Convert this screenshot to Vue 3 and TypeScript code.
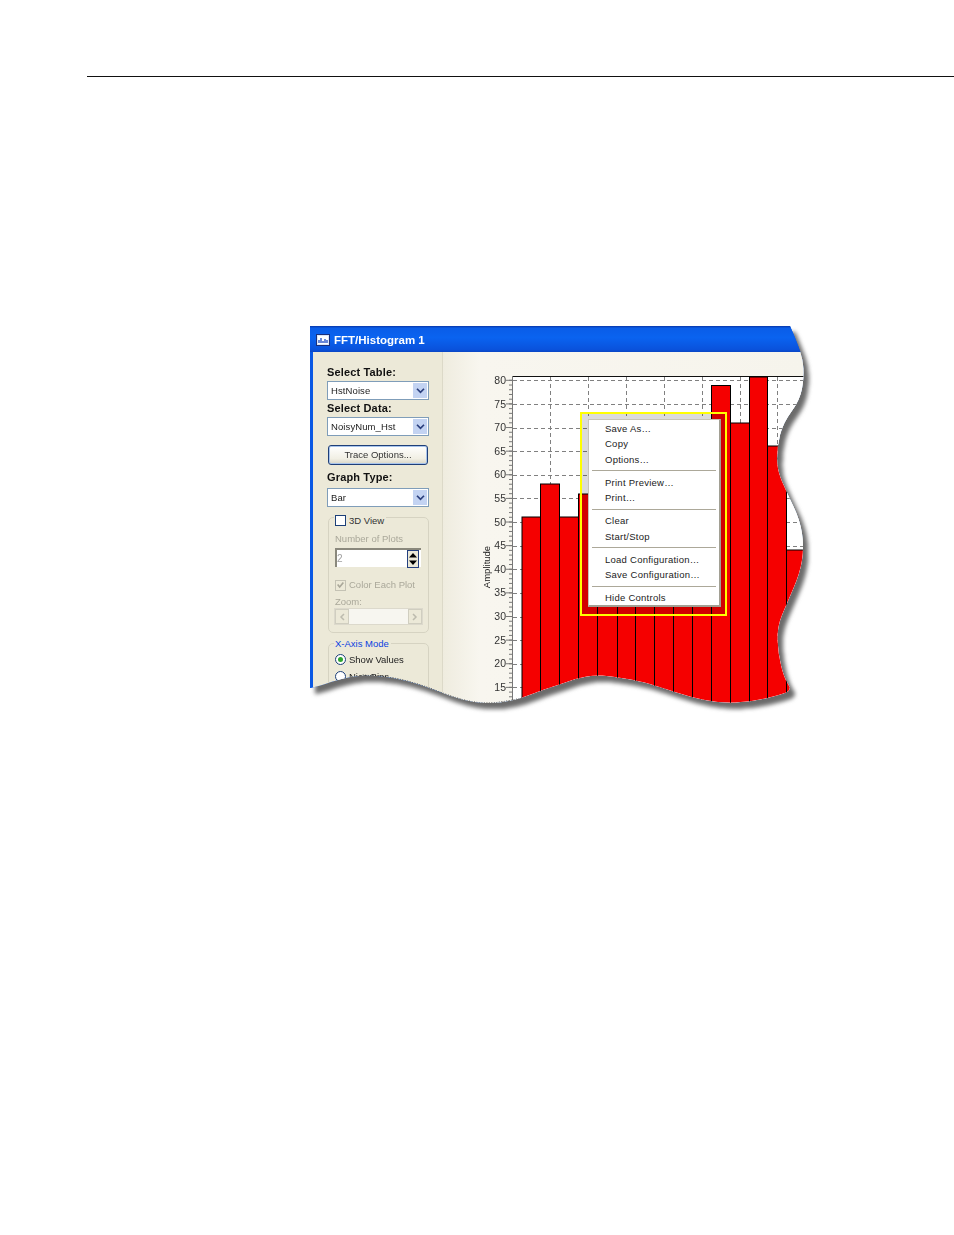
<script setup lang="ts">
const ox = 310
const oy = 326
const edge: [number, number][] = [
  [790, 326], [797, 342], [803, 360], [804, 377], [800, 400], [783, 423], [777, 447], [777, 470], [787, 493],
  [800, 520], [804, 547], [800, 573], [787, 603], [777, 627], [778, 653], [784, 678], [792, 690], [780, 695],
  [750, 702], [720, 703], [690, 697], [660, 687], [640, 681], [610, 676], [595, 675], [578, 678], [558, 685],
  [542, 690], [522, 698], [500, 703], [475, 703], [450, 696], [422, 685], [392, 677], [362, 675], [340, 679],
  [322, 685], [311, 688],
]
function smooth(pts: [number, number][], dx: number, dy: number): string {
  let d = `M${pts[0][0] - dx} ${pts[0][1] - dy}`
  for (let i = 1; i < pts.length - 1; i++) {
    const mx = (pts[i][0] + pts[i + 1][0]) / 2 - dx
    const my = (pts[i][1] + pts[i + 1][1]) / 2 - dy
    d += ` Q${pts[i][0] - dx} ${pts[i][1] - dy} ${mx} ${my}`
  }
  const last = pts[pts.length - 1]
  return d + ` L${last[0] - dx} ${last[1] - dy}`
}
const clipD = `M0 0 L480 0 ` + smooth(edge, ox, oy).slice(1) + ` L0 362 Z`
const clipStyle = { clipPath: `path('${clipD}')` }
const start = edge.findIndex(p => p[0] === 522)
const end = edge.findIndex(p => p[0] === 362)
const dotted = smooth(edge.slice(start, end + 1), ox, oy)

const labels = [80, 75, 70, 65, 60, 55, 50, 45, 40, 35, 30, 25, 20, 15].map((v, i) => ({ v, y: 380.3 + i * 23.62, g: Math.round(380.3 + i * 23.62) + 0.5 }))
const minor = Array.from({ length: 70 }, (_, i) => 380.3 + i * 4.724)
const vgrid = [550.5, 588.5, 626.5, 664.5, 702.5, 740.5, 777.5]
const edges = [522, 540.5, 559.5, 578.5, 597.5, 617.5, 635.5, 654.5, 673.5, 692.5, 711.5, 730.5, 749.5, 767.5, 786.5, 807]
const tops = [517, 484, 517, 494, 440, 440, 440, 440, 440, 440, 385.5, 423, 377, 446, 550]
const bars = tops.map((t, i) => ({ x: edges[i], w: edges[i + 1] - edges[i], y: t }))

const menu = [
  ['Save As…', 'Copy', 'Options…'],
  ['Print Preview…', 'Print…'],
  ['Clear', 'Start/Stop'],
  ['Load Configuration…', 'Save Configuration…'],
  ['Hide Controls'],
]
</script>

<template>
  <div class="page">
    <hr class="rule" />
    <figure class="figure">
      <div class="window" :style="clipStyle">
        <header class="title">
          <svg class="ticon" viewBox="0 0 14 12" width="14" height="12">
            <rect x="0.5" y="0.5" width="13" height="11" fill="#dce6f8" stroke="#1a2f7a" />
            <rect x="2" y="2" width="10" height="8" fill="#fff" />
            <path d="M3 9V6M5 9V4M7 9V7M9 9V5M11 9V6" stroke="#2a55c8" stroke-width="1.4" />
          </svg>
          <span>FFT/Histogram 1</span>
        </header>
        <div class="client">
          <aside class="side">
            <label class="lbl first">Select Table:</label>
            <div class="combo"><span>HstNoise</span><i class="drop"><svg viewBox="0 0 10 8" width="9" height="7"><path d="M1 2l4 4 4-4" fill="none" stroke="#2b3f7d" stroke-width="2" /></svg></i></div>
            <label class="lbl tight">Select Data:</label>
            <div class="combo"><span>NoisyNum_Hst</span><i class="drop"><svg viewBox="0 0 10 8" width="9" height="7"><path d="M1 2l4 4 4-4" fill="none" stroke="#2b3f7d" stroke-width="2" /></svg></i></div>
            <button class="btn">Trace Options...</button>
            <label class="lbl gt">Graph Type:</label>
            <div class="combo"><span>Bar</span><i class="drop"><svg viewBox="0 0 10 8" width="9" height="7"><path d="M1 2l4 4 4-4" fill="none" stroke="#2b3f7d" stroke-width="2" /></svg></i></div>

            <section class="group g1">
              <div class="legend check-legend"><i class="box"></i><span>3D View</span></div>
              <div class="dim nop">Number of Plots</div>
              <div class="spin">
                <span>2</span>
                <i class="spinbtn">
                  <svg viewBox="0 0 12 18" width="12" height="18">
                    <rect x="0.5" y="0.5" width="11" height="17" fill="#ece9d8" stroke="#24407f" />
                    <path d="M6 3L10 7.5H2z" fill="#000" /><path d="M6 15L10 10.5H2z" fill="#000" />
                  </svg>
                </i>
              </div>
              <div class="dim ceach">
                <i class="box off"><svg viewBox="0 0 11 11" width="10" height="10"><path d="M2 5l2.5 3L9 2.5" fill="none" stroke="#a9a799" stroke-width="2" /></svg></i>
                <span>Color Each Plot</span>
              </div>
              <div class="dim zoomlbl">Zoom:</div>
              <div class="scroll">
                <i class="sbtn"><svg viewBox="0 0 6 8" width="6" height="8"><path d="M5 1L2 4l3 3" fill="none" stroke="#bdbbae" stroke-width="1.5" /></svg></i>
                <i class="strack"></i>
                <i class="sbtn"><svg viewBox="0 0 6 8" width="6" height="8"><path d="M1 1l3 3-3 3" fill="none" stroke="#bdbbae" stroke-width="1.5" /></svg></i>
              </div>
            </section>

            <section class="group g2">
              <div class="legend blue">X-Axis Mode</div>
              <div class="radio first"><i class="dot on"></i><span>Show Values</span></div>
              <div class="radio"><i class="dot"></i><span>Nice Bins</span></div>
            </section>
          </aside>

          <main class="plot">
            <svg class="chart" viewBox="443 352 362 354" width="362" height="354">
              <rect x="512" y="376" width="294" height="331" fill="#fff" />
              <g stroke="#808080" stroke-dasharray="4 3" stroke-width="1">
                <line v-for="l in labels" :key="l.v" x1="513" x2="805" :y1="l.g" :y2="l.g" />
                <line v-for="x in vgrid" :key="x" :x1="x" :x2="x" y1="377" y2="706" />
              </g>
              <line x1="512" x2="806" y1="376.5" y2="376.5" stroke="#111" />
              <line x1="512.5" x2="512.5" y1="376" y2="706" stroke="#777" stroke-width="1" />
              <g fill="#f50000" stroke="#000" stroke-width="1">
                <rect v-for="b in bars" :key="b.x" :x="b.x" :y="b.y" :width="b.w" height="360" />
              </g>
              <g stroke="#777" stroke-width="1">
                <line v-for="m in minor" :key="m" x1="509" x2="512" :y1="m" :y2="m" />
                <line v-for="l in labels" :key="l.v" x1="506" x2="512" :y1="l.y" :y2="l.y" />
              </g>
              <g class="ylab">
                <text v-for="l in labels" :key="l.v" x="506" :y="l.y + 3.6" text-anchor="end">{{ l.v }}</text>
              </g>
              <text class="ytitle" transform="translate(490 567) rotate(-90)" text-anchor="middle">Amplitude</text>
            </svg>
            <div class="hilite"></div>
            <ul class="menu">
              <li v-for="(grp, i) in menu" :key="i" class="mgroup">
                <div v-for="item in grp" :key="item" class="mitem">{{ item }}</div>
              </li>
            </ul>
          </main>
        </div>
        <svg class="edge" viewBox="0 0 496 380" width="496" height="380">
          <path :d="dotted" fill="none" stroke="#111" stroke-width="1" stroke-dasharray="1 1.5" />
        </svg>
      </div>
    </figure>
  </div>
</template>

<style>
html, body { margin: 0; background: #fff; }
</style>

<style scoped>
.page { width: 954px; height: 1235px; overflow: hidden; background: #fff; font-family: "Liberation Sans", Arial, sans-serif; }
.rule { margin: 76px 0 0 87px; height: 1px; border: 0; background: #111; }
.figure { margin: 249px 0 0 310px; width: 510px; height: 395px; filter: drop-shadow(5px 6px 2px rgba(70, 70, 70, .8)); }
.window { position: relative; width: 496px; height: 380px; display: flex; flex-direction: column; overflow: hidden; background: #0a58e4; }
.edge { position: absolute; left: 0; top: 0; pointer-events: none; }
.title { height: 26px; flex: none; display: flex; align-items: center; gap: 4px; padding: 2px 0 0 6px; box-sizing: border-box; color: #fff; font-weight: 700; font-size: 11.5px; background: linear-gradient(#0836a8 0, #0a5de8 8%, #0a63f0 45%, #0a52dc 90%, #0a46c4 100%); }
.ticon { flex: none; }
.client { flex: 1; min-height: 0; display: flex; margin-left: 3px; background: #ece9d8; }
.side { width: 130px; flex: none; box-sizing: border-box; padding: 14px 13px 0 14px; border-right: 1px solid #dcd9c8; color: #111; font-size: 9.5px; display: flex; flex-direction: column; align-items: flex-start; }
.lbl { font-weight: 700; font-size: 11px; line-height: 13px; letter-spacing: .15px; color: #111; }
.lbl.first { margin-bottom: 2px; }
.lbl.tight { line-height: 16px; height: 16px; margin-bottom: 1px; }
.lbl.gt { margin-top: 6px; margin-bottom: 4px; }
.combo { width: 102px; height: 19px; box-sizing: border-box; flex: none; border: 1px solid #7f9db9; background: #fff; display: flex; align-items: center; justify-content: space-between; padding: 1px 1px 1px 3px; font-size: 9.5px; letter-spacing: .1px; color: #222; }
.drop { width: 14px; height: 15px; display: flex; align-items: center; justify-content: center; background: #c3d3f2; }
.btn { width: 100px; height: 20px; flex: none; margin: 9px 0 0 1px; padding: 0 0 2px; box-sizing: border-box; border: 1px solid #1f3f78; border-radius: 3px; background: linear-gradient(#fff, #f1efe4 70%, #d8d5c6); box-shadow: inset 0 0 0 1px #a8c4ec; font: 9.5px "Liberation Sans", Arial, sans-serif; color: #333; }
.group { width: 101px; margin-left: 1px; box-sizing: border-box; flex: none; border: 1px solid #d6d3c2; border-radius: 5px; position: relative; padding: 0 6px; }
.g1 { height: 116px; margin-top: 10px; display: flex; flex-direction: column; align-items: flex-start; }
.g2 { height: 60px; margin-top: 10px; display: flex; flex-direction: column; align-items: flex-start; }
.legend { position: absolute; top: -7px; left: 5px; background: #ece9d8; padding: 0 2px 0 1px; line-height: 13px; font-size: 9.5px; }
.check-legend { display: flex; align-items: center; gap: 3px; top: -4px; color: #333; }
.legend.blue { color: #0a3fe0; top: -7px; }
.box { width: 11px; height: 11px; display: flex; align-items: center; justify-content: center; box-sizing: border-box; border: 1px solid #1c3f78; background: #fff; flex: none; }
.box.off { border-color: #c4c2b4; background: #ece9d8; }
.dim { color: #aaa89a; font-size: 9.5px; line-height: 12px; }
.nop { margin-top: 15px; }
.spin { width: 86px; height: 19px; flex: none; margin-top: 3px; box-sizing: border-box; border-top: 2px solid #8a887c; border-left: 2px solid #8a887c; background: #fff; display: flex; justify-content: space-between; align-items: center; padding-right: 2px; color: #a0a0a0; font-size: 10px; }
.spinbtn { display: flex; width: 12px; }
.ceach { display: flex; align-items: center; gap: 3px; margin-top: 12px; }
.zoomlbl { margin-top: 5px; }
.scroll { width: 89px; height: 17px; flex: none; margin: 0 0 0 -1px; display: flex; border: 1px solid #dcd9cc; box-sizing: border-box; background: #f7f6f0; }
.sbtn { width: 14px; display: flex; align-items: center; justify-content: center; background: #ece9d8; border: 1px solid #d0cec0; box-sizing: border-box; }
.strack { flex: 1; }
.radio { display: flex; align-items: center; gap: 3px; font-size: 9.5px; line-height: 17px; color: #222; }
.radio.first { margin-top: 7px; }
.dot { width: 11px; height: 11px; border-radius: 50%; box-sizing: border-box; border: 1px solid #1c3f78; background: #fff; display: block; position: relative; flex: none; }
.dot.on::after { content: ""; position: absolute; inset: 2px; border-radius: 50%; background: #2ea52e; }
.plot { flex: 1; min-width: 0; position: relative; background: linear-gradient(90deg, #efecdf, #f8f6ef 10%, #f6f4ec); }
.chart { display: block; }
.ylab { font-size: 10.5px; fill: #333; font-family: "Liberation Sans", Arial, sans-serif; }
.ytitle { font-size: 9.5px; fill: #222; font-family: "Liberation Sans", Arial, sans-serif; }
.hilite { position: absolute; left: 137px; top: 60px; width: 147px; height: 204px; box-sizing: border-box; border: 2px solid #ff0; background: rgba(0, 0, 0, .14); }
.menu { position: absolute; left: 145px; top: 67px; width: 133px; height: 188px; margin: 0; padding: 1px 3px; box-sizing: border-box; list-style: none; background: #fff; border: 1px solid #c6c4b8; border-right: 2px solid #a2a094; border-bottom: 2px solid #a2a094; font-size: 9.5px; letter-spacing: .25px; color: #222; }
.mgroup { border-bottom: 1px solid #aca899; padding-bottom: 3px; margin-bottom: 3.7px; }
.mgroup:last-child { border: 0; margin: 0; padding: 0; }
.mitem { height: 15.4px; line-height: 15.4px; padding-left: 13px; white-space: nowrap; }
</style>
